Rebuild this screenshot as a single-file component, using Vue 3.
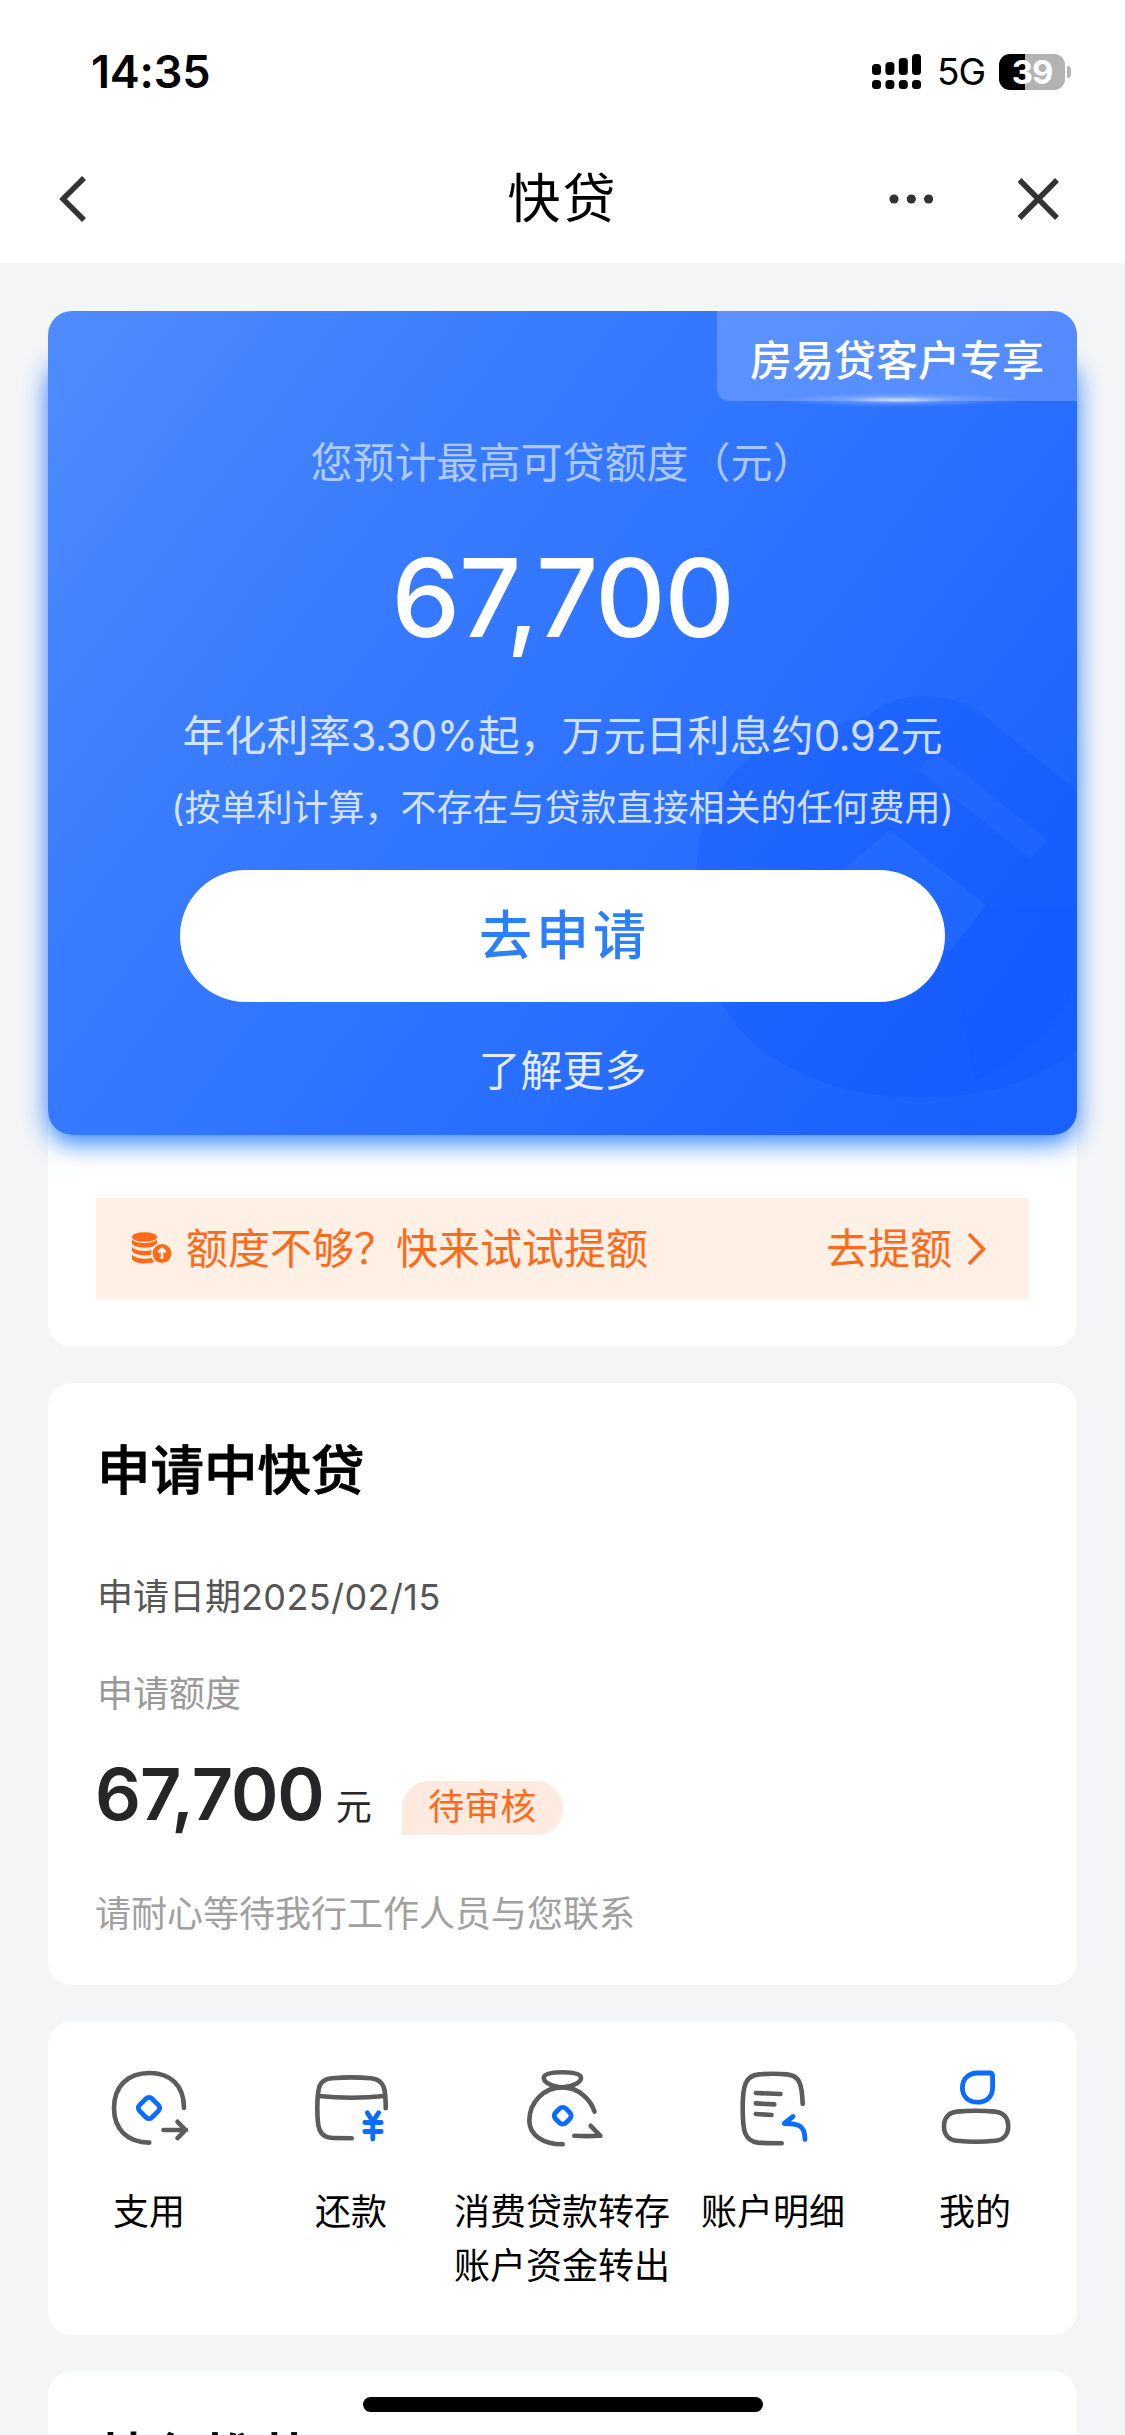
<script setup>
const signal = [
  { x: 0, y: 10, h: 11 },
  { x: 13.4, y: 8, h: 13 },
  { x: 26.8, y: 4, h: 17 },
  { x: 40, y: 0, h: 21 },
]
</script>

<template>
  <div class="page">
    <header class="top">
      <div class="status">
        <span class="time">14:35</span>
        <div class="status-right">
          <svg class="signal" width="49" height="36" viewBox="0 0 49 36">
            <g v-for="b in signal" :key="b.x">
              <rect :x="b.x" :y="b.y" width="9" :height="b.h" rx="3.5" />
              <rect :x="b.x" y="26" width="9" height="9" rx="3.5" />
            </g>
          </svg>
          <span class="net">5G</span>
          <div class="battery"><span>39</span></div>
          <i class="nub"></i>
        </div>
      </div>
      <nav class="nav">
        <svg class="back" width="30" height="48" viewBox="0 0 30 48">
          <path d="M27 3 L6 24 L27 45" />
        </svg>
        <h1>快贷</h1>
        <div class="nav-right">
          <svg class="dots" width="46" height="12" viewBox="0 0 46 12">
            <circle cx="6" cy="6" r="4.6" /><circle cx="23.3" cy="6" r="4.6" /><circle cx="40.6" cy="6" r="4.6" />
          </svg>
          <svg class="close" width="44" height="44" viewBox="0 0 44 44">
            <path d="M2.5 3 L40 41 M40 3 L2.5 41" />
          </svg>
        </div>
      </nav>
    </header>

    <main class="content">
      <section class="offer">
        <div class="hero">
          <div class="hero-glow"></div>
          <div class="hero-bg">
            <svg width="1029" height="824" viewBox="48 311 1029 824">
              <path
                d="M697 868 C700 800 735 755 790 738 L868 716 C890 692 945 688 980 712 L1090 802 V1040 C1040 1085 975 1100 904 1097 C810 1092 745 1050 722 1003 C704 965 697 920 697 868 Z"
                fill="#0a50ff" opacity=".24"
              />
              <path d="M890 830 L986 905 L952 950 H800 V905 Z" fill="#3c80ff" opacity=".24" />
              <path d="M936 752 L1048 840 L1030 858 L918 770 Z" fill="#4a8aff" opacity=".14" />
              <path d="M986 905 H1077 V980 C1060 1030 1010 1065 975 1080 L950 950 Z" fill="#0a4bff" opacity=".07" />
            </svg>
          </div>
          <div class="tag">房易贷客户专享</div>
          <div class="hero-body">
            <p class="caption">您预计最高可贷额度（元）</p>
            <p class="amount">67,700</p>
            <p class="rate">年化利率<span class="fig">3.30%</span>起，万元日利息约<span class="fig">0.92</span>元</p>
            <p class="note">(按单利计算，不存在与贷款直接相关的任何费用)</p>
            <button class="apply">去申请</button>
            <a class="more">了解更多</a>
          </div>
        </div>
        <div class="raise">
          <svg class="coins" width="42" height="34" viewBox="0 0 42 34">
            <g fill="#ff6a1a">
              <ellipse cx="13.5" cy="5" rx="12.5" ry="4.8" />
              <path d="M1 7.5 C5 12.2 22 12.2 26 7.5 V11.5 C24 17 3 17 1 11.5 Z" />
              <path d="M1 15 C5 19.8 19 19.8 23 17 L21 22.5 C15 24.3 3 23.5 1 19 Z" />
              <path d="M1 22.5 C5 27 15 27.5 21 26 L23 30 C17 32.5 3 32 1 27 Z" />
            </g>
            <circle cx="31" cy="21.5" r="11" fill="#fff0e6" />
            <circle cx="31" cy="21.5" r="9.4" fill="#ff6a1a" />
            <path d="M31 27 V17 M27.3 20.4 L31 16.6 L34.7 20.4" fill="none" stroke="#fff4ec" stroke-width="2.6" />
          </svg>
          <span class="raise-text">额度不够？快来试试提额</span>
          <span class="raise-link">去提额</span>
          <svg class="chev" width="20" height="36" viewBox="0 0 20 36">
            <path d="M2 3 L16.5 18 L2 33" />
          </svg>
        </div>
      </section>

      <section class="card pending">
        <h2>申请中快贷</h2>
        <p class="date">申请日期<span>2025/02/15</span></p>
        <p class="label">申请额度</p>
        <div class="sum">
          <span class="num">67,700</span>
          <span class="unit">元</span>
          <span class="badge">待审核</span>
        </div>
        <p class="hint">请耐心等待我行工作人员与您联系</p>
      </section>

      <section class="card menu">
        <div class="item">
          <svg class="ico" viewBox="0 0 90 90">
            <path d="M80 44 C80 21 66 9 45.5 9 C23 9 10 23 10 44.3 C10 65 23 78.4 45.3 78.6" />
            <rect class="b" x="36.3" y="35.3" width="17.4" height="17.4" rx="4" transform="rotate(45 45 44)" />
            <path d="M59.5 66 H82 M73.5 57.8 L81.5 66 L73.5 74.2" />
          </svg>
          <span>支用</span>
        </div>
        <div class="item">
          <svg class="ico" viewBox="0 0 90 90">
            <path d="M79.7 44.3 C79.7 26 79 15.5 65 14.2 Q45.5 12.6 26 14.2 C13.5 15.3 11.3 22 11.3 44 C11.3 62 12 73.7 27 74 L45.7 74.3" />
            <path d="M13 32 Q45.5 35.5 78.5 32" />
            <path class="b" d="M61.3 48.8 L66.8 57.5 L72.6 48.8 M66.8 57.5 V75 M58.8 58.5 H75.2 M58.8 67.5 H75.2" />
          </svg>
          <span>还款</span>
        </div>
        <div class="item wide">
          <svg class="ico" viewBox="0 0 90 90">
            <path d="M45.3 8.2 C57 8.2 64 9.8 64 14 C64 18 56 23.2 45.3 23.2 C34.6 23.2 26.8 18 26.8 14 C26.8 9.8 34 8.2 45.3 8.2 Z" />
            <path d="M77.5 47.7 C74 36 62 23.4 45.3 23.4 C27 23.4 12.3 38 12.3 56.5 C12.3 71 26 80.3 45.7 80.3" />
            <rect class="b" x="38.4" y="44.4" width="14.6" height="14.6" rx="4.6" transform="rotate(45 45.7 51.7)" />
            <path d="M57.3 71.8 Q70 72.4 83.4 71.8 L73.7 61.8" />
          </svg>
          <span>消费贷款转存<br />账户资金转出</span>
        </div>
        <div class="item">
          <svg class="ico" viewBox="0 0 90 90">
            <path d="M74.7 39.8 C74 21 72 11.5 59 10.4 Q45 9.2 31 10.4 C17 11.6 14.7 22 14.7 44 C14.7 66 16 77 30 78.6 Q38 79.2 53.7 79.2" />
            <path d="M27.8 29 L52.5 30 M27.8 39.4 L46.3 40.4 M27.8 50 L43.5 51" />
            <path class="b" d="M65 52.5 L56.2 59.5 C70 59.5 77 61 77 75.5" />
          </svg>
          <span>账户明细</span>
        </div>
        <div class="item">
          <svg class="ico" viewBox="0 0 90 90">
            <path class="b" d="M47.5 9 H59.5 Q62.6 9 62.6 12.2 V23.5 C62.6 33 56 38.2 47.3 38.2 C38 38.2 32.4 32 32.4 23.8 C32.4 15 38.5 9 47.5 9 Z" />
            <path d="M27 47.6 Q46 46 65 47.6 C74 48.5 78.2 54.5 78.2 62.2 C78.2 70 74 76 65 76.8 Q46 78.6 27 76.8 C18 76 14 70 14 62.2 C14 54.5 18 48.5 27 47.6 Z" />
          </svg>
          <span>我的</span>
        </div>
      </section>

      <section class="card featured">
        <h2>特色推荐</h2>
      </section>
    </main>
    <div class="home-bar"></div>
  </div>
</template>

<style>
body {
  margin: 0;
  background: #f4f5f7;
}
</style>

<style scoped>
.page {
  position: relative;
  width: 1125px;
  height: 2435px;
  overflow: hidden;
  background: #f4f5f7;
  font-family: Inter, "Noto Sans CJK SC", sans-serif;
  color: #000;
}
p, h1, h2 { margin: 0; }

.top { height: 263px; background: #fff; }
.status {
  display: flex;
  justify-content: space-between;
  align-items: center;
  height: 143px;
  padding: 0 54px 0 91px;
  box-sizing: border-box;
}
.time { font-size: 45px; font-weight: 600; letter-spacing: -0.2px; }
.status-right { display: flex; align-items: center; }
.signal { margin-right: 16px; }
.net { width: 62px; font-size: 37px; letter-spacing: -1px; }
.battery {
  width: 66px;
  height: 36px;
  border-radius: 11px;
  background: linear-gradient(90deg, #000 26px, #b3b3b3 26px);
  color: #fff;
  font-size: 33px;
  font-weight: 700;
  line-height: 36px;
  text-align: center;
  letter-spacing: -1px;
}
.nub { width: 4px; height: 12px; margin-left: 2px; border-radius: 0 6px 6px 0; background: #b3b3b3; }
.nav {
  display: grid;
  grid-template-columns: 1fr auto 1fr;
  align-items: center;
  height: 112px;
  padding: 0 64px 0 57px;
}
.back { fill: none; stroke: #333; stroke-width: 5.5; }
h1 { padding-left: 7px; font-size: 53px; line-height: 80px; font-weight: 400; letter-spacing: 2px; }
.nav-right { display: flex; justify-content: flex-end; align-items: center; gap: 83px; }
.dots { fill: #333; }
.close { fill: none; stroke: #333; stroke-width: 5.5; }

.content {
  display: flex;
  flex-direction: column;
  gap: 36px;
  padding: 48px 48px 0;
}
.card, .offer { background: #fff; border-radius: 24px; }
.offer { height: 1036px; }
.hero { position: relative; height: 824px; }
.hero-glow {
  position: absolute;
  inset: 44px 0 0;
  border-radius: 24px;
  box-shadow: 0 8px 26px #2f82fa;
}
.hero-bg {
  position: absolute;
  inset: 0;
  border-radius: 24px;
  overflow: hidden;
  background: linear-gradient(127deg, #508cff 0%, #397cff 30%, #2a70ff 62%, #1d63ff 85%, #1a60ff 100%);
}
.tag {
  position: absolute;
  top: 0;
  right: 0;
  width: 360px;
  height: 90px;
  padding-left: 33px;
  box-sizing: border-box;
  border-radius: 0 24px 0 12px;
  background: rgba(255, 255, 255, 0.2);
  color: #fff;
  font-size: 42px;
  font-weight: 500;
  line-height: 99px;
  white-space: nowrap;
}
.tag::after {
  content: "";
  position: absolute;
  left: 60px;
  bottom: -6px;
  width: 240px;
  height: 14px;
  background: radial-gradient(closest-side, rgba(255, 255, 255, 0.75), rgba(255, 255, 255, 0.2) 45%, transparent);
}
.hero-body {
  position: relative;
  display: flex;
  flex-direction: column;
  align-items: center;
  padding-top: 122px;
  color: #fff;
  white-space: nowrap;
}
.caption { font-size: 42px; line-height: 60px; color: rgba(255, 255, 255, 0.6); }
.amount { margin-top: 44px; font-size: 109px; font-weight: 500; line-height: 120px; letter-spacing: -1.3px; }
.rate { margin-top: 49px; font-size: 42px; line-height: 60px; color: rgba(255, 255, 255, 0.8); }
.fig { letter-spacing: -0.5px; }
.note { margin-top: 16px; font-size: 36px; line-height: 52px; color: rgba(255, 255, 255, 0.8); }
.apply {
  width: 765px;
  height: 132px;
  margin-top: 36px;
  padding: 0 0 0 4px;
  border: 0;
  border-radius: 66px;
  background: #fff;
  color: #2b7ffa;
  font: 500 53px/132px Inter, "Noto Sans CJK SC", sans-serif;
  letter-spacing: 4px;
}
.more { margin-top: 39px; font-size: 42px; line-height: 60px; color: rgba(255, 255, 255, 0.9); }
.raise {
  display: flex;
  align-items: center;
  height: 101px;
  margin: 63px 48px 0;
  padding: 0 42px 0 35px;
  background: #fff0e6;
  color: #ff6a1a;
  font-size: 42px;
  line-height: 101px;
}
.raise-text { margin-left: 13px; flex: 1; }
.chev { margin-left: 15px; fill: none; stroke: #ff6a1a; stroke-width: 3.5; }

h2 { padding-left: 1px; font-size: 53.5px; font-weight: 500; line-height: 76px; -webkit-text-stroke: 0.8px #000; }
.pending { height: 602px; padding: 50px 48px 0; box-sizing: border-box; font-size: 36px; }
.date { margin-top: 62px; padding-left: 1px; line-height: 52px; color: #555; }
.date span { letter-spacing: 0.4px; }
.label { margin-top: 45px; padding-left: 1px; line-height: 52px; color: #999; }
.sum { display: flex; align-items: baseline; height: 90px; margin-top: 29px; }
.num { margin-left: -1px; font-size: 72px; font-weight: 600; line-height: 90px; color: #262628; letter-spacing: -1.1px; }
.unit { margin-left: 12px; color: #262628; line-height: 52px; }
.badge {
  width: 161px;
  height: 54px;
  margin-left: 30px;
  border-radius: 27px 27px 27px 0;
  background: #ffeadf;
  color: #ff6a1a;
  line-height: 52px;
  text-align: center;
}
.hint { margin-top: 49px; margin-left: -1px; line-height: 52px; color: #a0a0a0; }

.menu { display: flex; height: 314px; padding-top: 43px; box-sizing: border-box; }
.item {
  display: flex;
  flex: 0 0 202px;
  flex-direction: column;
  align-items: center;
  font-size: 36px;
  line-height: 54px;
  white-space: nowrap;
}
.item.wide { flex-basis: 220px; }
.ico {
  width: 90px;
  height: 90px;
  margin-bottom: 31px;
  fill: none;
  stroke: #5c5c5c;
  stroke-width: 4.6;
  stroke-linecap: round;
  stroke-linejoin: round;
}
.ico .b { stroke: #0a6cff; stroke-width: 4.8; }
.featured { height: 300px; padding: 50px 48px 0; box-sizing: border-box; }
.home-bar {
  position: absolute;
  left: 363px;
  top: 2397px;
  width: 400px;
  height: 15px;
  border-radius: 8px;
  background: #000;
}
</style>
